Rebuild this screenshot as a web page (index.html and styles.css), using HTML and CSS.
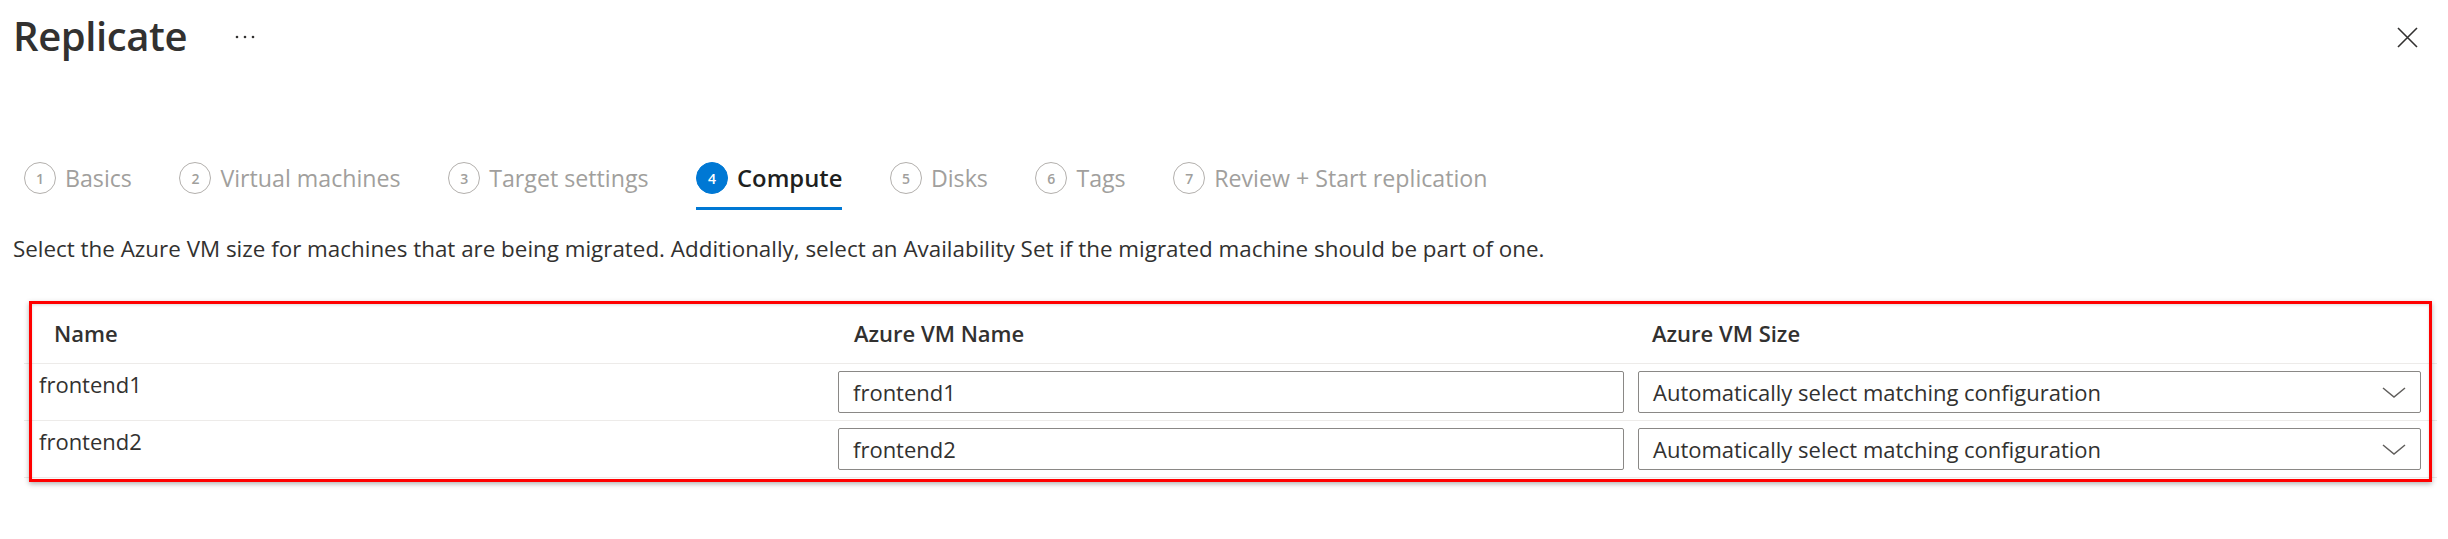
FILE: index.html
```html
<!DOCTYPE html>
<html lang="en">
<head>
<meta charset="utf-8">
<title>Replicate</title>
<link rel="stylesheet" href="styles.css">
</head>
<body>
<div class="blade">
  <header class="blade-header">
    <h1 class="blade-title">Replicate</h1>
    <button class="icon-btn more-btn" aria-label="More actions">
      <svg width="24" height="24" viewBox="0 0 24 24"><circle cx="4" cy="12" r="1.3"/><circle cx="12" cy="12" r="1.3"/><circle cx="20" cy="12" r="1.3"/></svg>
    </button>
    <button class="icon-btn close-btn" aria-label="Close">
      <svg width="21" height="21" viewBox="0 0 21 21"><path d="M1 1 L20 20 M20 1 L1 20" fill="none" stroke="#323130" stroke-width="1.6"/></svg>
    </button>
  </header>

  <nav class="steps">
    <div class="step"><span class="step-num">1</span><span class="step-label">Basics</span></div>
    <div class="step"><span class="step-num">2</span><span class="step-label">Virtual machines</span></div>
    <div class="step"><span class="step-num">3</span><span class="step-label">Target settings</span></div>
    <div class="step active"><span class="step-num">4</span><span class="step-label">Compute</span></div>
    <div class="step"><span class="step-num">5</span><span class="step-label">Disks</span></div>
    <div class="step"><span class="step-num">6</span><span class="step-label">Tags</span></div>
    <div class="step"><span class="step-num">7</span><span class="step-label">Review + Start replication</span></div>
  </nav>

  <p class="intro">Select the Azure VM size for machines that are being migrated. Additionally, select an Availability Set if the migrated machine should be part of one.</p>

  <div class="grid-wrap">
    <div class="grid">
      <div class="grid-row header-row">
        <div class="th th-name">Name</div>
        <div class="th th-vmname">Azure VM Name</div>
        <div class="th th-size">Azure VM Size</div>
      </div>
      <div class="grid-row data-row">
        <div class="td-name">frontend1</div>
        <div class="td-field"><input class="text-field" type="text" value="frontend1"></div>
        <div class="td-field">
          <div class="dropdown" role="combobox"><span>Automatically select matching configuration</span>
            <svg width="24" height="11" viewBox="0 0 24 11"><path d="M1 1 L12 10 L23 1" fill="none" stroke="#605e5c" stroke-width="1.5"/></svg>
          </div>
        </div>
      </div>
      <div class="grid-row data-row">
        <div class="td-name">frontend2</div>
        <div class="td-field"><input class="text-field" type="text" value="frontend2"></div>
        <div class="td-field">
          <div class="dropdown" role="combobox"><span>Automatically select matching configuration</span>
            <svg width="24" height="11" viewBox="0 0 24 11"><path d="M1 1 L12 10 L23 1" fill="none" stroke="#605e5c" stroke-width="1.5"/></svg>
          </div>
        </div>
      </div>
    </div>
    <div class="highlight"></div>
  </div>
</div>
</body>
</html>
```

FILE: styles.css
```css
html, body {
  min-height: 539px;
}

body {
  margin: 0;
  background: #ffffff;
  font-family: "Open Sans", "Segoe UI", sans-serif;
  color: #323130;
}

.blade {
  padding-bottom: 40px;
}

.blade-header {
  display: flex;
  align-items: center;
  height: 74px;
  padding: 0 30px 0 13px;
}

.blade-title {
  margin: 0;
  padding-bottom: 3px;
  font-size: 40px;
  line-height: 40px;
  font-weight: 600;
  letter-spacing: -0.4px;
  color: #323130;
}

.icon-btn {
  border: 0;
  background: none;
  padding: 0;
  display: flex;
  cursor: pointer;
}

.more-btn {
  margin-left: 46px;
  fill: #323130;
}

.close-btn {
  margin-left: auto;
}

.steps {
  display: flex;
  gap: 47.5px;
  margin-top: 88px;
  padding-left: 24px;
}

.step {
  display: flex;
  align-items: center;
  gap: 9px;
  height: 32px;
  padding-bottom: 13px;
  border-bottom: 3px solid transparent;
  color: #a19f9d;
  font-size: 23.2px;
}

.step-num {
  box-sizing: border-box;
  width: 32px;
  height: 32px;
  border: 1.5px solid #b3b0ad;
  border-radius: 50%;
  display: flex;
  align-items: center;
  justify-content: center;
  font-size: 14px;
  font-weight: 600;
}

.step-label {
  line-height: 32px;
}

.step.active {
  border-bottom-color: #0078d4;
  color: #201f1e;
}

.step.active .step-num {
  background: #0078d4;
  border-color: #0078d4;
  color: #ffffff;
}

.step.active .step-label {
  font-weight: 600;
  font-size: 23.8px;
}

.intro {
  margin: 25px 0 0;
  padding-left: 13px;
  font-size: 22.4px;
  line-height: 28px;
}

.grid-wrap {
  position: relative;
  margin: 39px 0 0 24px;
  padding-bottom: 6px;
  width: 2413px;
}

.grid-row {
  display: grid;
  grid-template-columns: 800px 786px 783px;
  column-gap: 14px;
  padding-right: 16px;
  border-bottom: 1px solid #edebe9;
}

.header-row {
  height: 61px;
  align-items: center;
  font-size: 22px;
  font-weight: 600;
  line-height: 30px;
}

.th-name { padding-left: 30px; }
.th-vmname { padding-left: 16px; }
.th-size { padding-left: 14px; }

.data-row {
  height: 56px;
}

.td-name {
  padding: 5px 0 0 15px;
  font-size: 22px;
  line-height: 30px;
}

.td-field {
  padding-top: 7px;
}

.text-field,
.dropdown {
  box-sizing: border-box;
  width: 100%;
  height: 42px;
  border: 1px solid #8a8886;
  border-radius: 2px;
  padding: 0 14px;
  font-family: "Open Sans", "Segoe UI", sans-serif;
  font-size: 22px;
  color: #323130;
  background: #ffffff;
}

.text-field {
  outline: none;
}

.dropdown {
  display: flex;
  align-items: center;
  justify-content: space-between;
  line-height: 30px;
}

.highlight {
  position: absolute;
  left: 5px;
  top: -1px;
  width: 2403px;
  height: 181px;
  box-sizing: border-box;
  border: 3px solid #ff0000;
  box-shadow: 0 2px 5px rgba(0, 0, 0, 0.3), inset 0 1px 3px rgba(0, 0, 0, 0.15);
  pointer-events: none;
}
```
